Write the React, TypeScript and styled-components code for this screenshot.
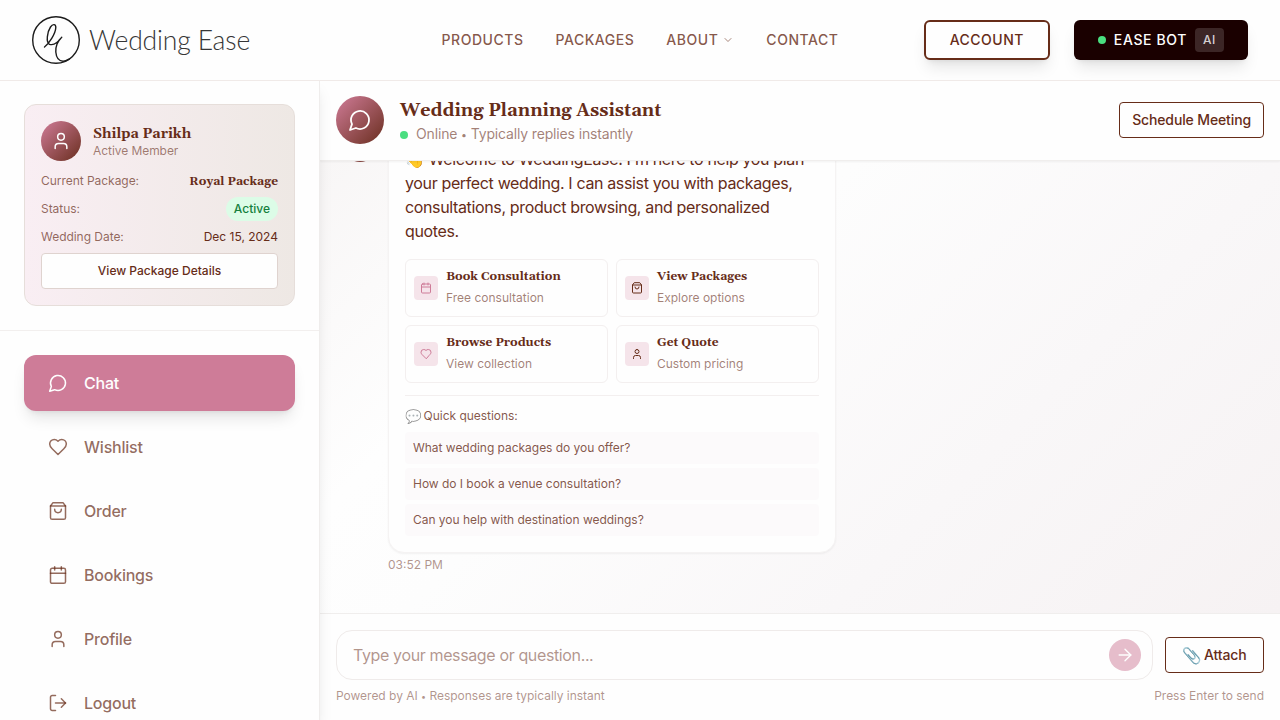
import React from "react";
import styled, { createGlobalStyle, css } from "styled-components";

const brownA = (a: number) => `rgba(102, 44, 24, ${a})`;
const serif = `Gelasio, Georgia, "Liberation Serif", serif`;

const Global = createGlobalStyle`
  * { box-sizing: border-box; }
  html, body { margin: 0; height: 100%; overflow: hidden; }
  body {
    font-family: Inter, "Liberation Sans", sans-serif;
    font-size: 16px;
    line-height: 24px;
    color: ${brownA(1)};
    background: #fefefe;
    -webkit-font-smoothing: antialiased;
  }
  button, input { font: inherit; color: inherit; margin: 0; }
`;

const Page = styled.div`
  height: 720px;
  display: flex;
  flex-direction: column;
  overflow: hidden;
`;

/* ---------- icons ---------- */

const paths = {
  chat: ["M7.9 20A9 9 0 1 0 4 16.1L2 22Z"],
  heart: [
    "M19 14c1.49-1.46 3-3.21 3-5.5A5.5 5.5 0 0 0 16.5 3c-1.76 0-3 .5-4.5 2-1.5-1.5-2.74-2-4.5-2A5.5 5.5 0 0 0 2 8.5c0 2.3 1.5 4.05 3 5.5l7 7Z",
  ],
  bag: ["M6 2 3 6v14a2 2 0 0 0 2 2h14a2 2 0 0 0 2-2V6l-3-4Z", "M3 6h18", "M16 10a4 4 0 0 1-8 0"],
  calendar: [
    "M8 2v4",
    "M16 2v4",
    "M5 4h14a2 2 0 0 1 2 2v14a2 2 0 0 1-2 2H5a2 2 0 0 1-2-2V6a2 2 0 0 1 2-2Z",
    "M3 10h18",
  ],
  user: ["M19 21v-2a4 4 0 0 0-4-4H9a4 4 0 0 0-4 4v2", "M12 3a4 4 0 1 0 0 8 4 4 0 0 0 0-8Z"],
  logout: ["M9 21H5a2 2 0 0 1-2-2V5a2 2 0 0 1 2-2h4", "m16 17 5-5-5-5", "M21 12H9"],
  arrow: ["M5 12h14", "m12 5 7 7-7 7"],
  chevron: ["m6 9 6 6 6-6"],
};

type IconName = keyof typeof paths;

const Svg = styled.svg`
  display: block;
  flex: none;
  fill: none;
  stroke: currentColor;
  stroke-linecap: round;
  stroke-linejoin: round;
`;

const Icon = ({ name, size, weight = 1.8 }: { name: IconName; size: number; weight?: number }) => (
  <Svg width={size} height={size} viewBox="0 0 24 24" strokeWidth={weight}>
    {paths[name].map((d) => (
      <path key={d} d={d} />
    ))}
  </Svg>
);

const Emoji = styled.span<{ $soft?: boolean }>`
  font-size: 1.12em;
  line-height: 0;
  margin: 0 -0.1em 0 -0.03em;
  vertical-align: -0.5px;
  opacity: ${(p) => (p.$soft ? 0.6 : 0.9)};
`;

/* ---------- top bar ---------- */

const TopBar = styled.header`
  flex: none;
  height: 81px;
  margin-bottom: -1px;
  padding: 0 32px;
  display: grid;
  grid-template-columns: 1fr auto 1fr;
  align-items: center;
  background: #fefefe;
  border-bottom: 1px solid #f0eae8;
  position: relative;
  z-index: 2;
`;

const Brand = styled.div`
  display: flex;
  align-items: center;
  gap: 9px;
  color: #1c1c1c;
`;

const BrandName = styled.span`
  font-family: Lato, sans-serif;
  font-weight: 300;
  font-size: 26.5px;
  line-height: 32px;
  letter-spacing: -0.15px;
  color: #363636;
  white-space: nowrap;
`;

const Nav = styled.nav`
  display: flex;
  align-items: center;
  gap: 32px;
`;

const NavLink = styled.a`
  display: flex;
  align-items: center;
  gap: 4px;
  font-size: 14px;
  line-height: 20px;
  font-weight: 450;
  letter-spacing: 0.53px;
  color: ${brownA(0.8)};
`;

const Chevron = styled.span`
  opacity: 0.7;
`;

const Actions = styled.div`
  display: flex;
  justify-content: flex-end;
  gap: 24px;
`;

const ActionButton = styled.button<{ $dark?: boolean }>`
  height: 40px;
  padding: 0 24px;
  display: flex;
  align-items: center;
  gap: 8px;
  border-radius: 6px;
  font-size: 14px;
  line-height: 20px;
  font-weight: 450;
  white-space: nowrap;
  box-shadow: 0 10px 15px -3px rgba(0, 0, 0, 0.1), 0 4px 6px -4px rgba(0, 0, 0, 0.1);
  ${(p) =>
    p.$dark
      ? css`
          border: 0;
          background: #1a0000;
          color: #fefefe;
          letter-spacing: 0.62px;
        `
      : css`
          border: 2px solid ${brownA(1)};
          background: #fefefe;
          letter-spacing: 0.48px;
        `}
`;

const Dot = styled.span`
  width: 8px;
  height: 8px;
  border-radius: 50%;
  background: #4ade80;
`;

const AiTag = styled.span`
  padding: 4px 8px;
  border-radius: 4px;
  background: rgba(255, 255, 255, 0.15);
  font-size: 12px;
  line-height: 16px;
  color: rgba(255, 255, 255, 0.8);
`;

/* ---------- sidebar ---------- */

const Body = styled.div`
  flex: 1;
  min-height: 0;
  display: flex;
`;

const Sidebar = styled.aside`
  width: 320px;
  flex: none;
  background: #fefefe;
  border-right: 1px solid #efedec;
  box-shadow: 0 10px 15px -3px rgba(0, 0, 0, 0.1), 0 4px 6px -4px rgba(0, 0, 0, 0.1);
  z-index: 1;
`;

const MemberSection = styled.section`
  padding: 24px;
  border-bottom: 1px solid #f2efee;
`;

const MemberCard = styled.div`
  height: 202px;
  padding: 16px;
  border: 1px solid #e6deda;
  border-radius: 12px;
  background: linear-gradient(to right, #f9eef3, #eee8e4);
`;

const MemberHead = styled.div`
  display: flex;
  align-items: center;
  gap: 12px;
  margin-bottom: 8px;
`;

const Avatar = styled.div<{ $size: number }>`
  width: ${(p) => p.$size}px;
  height: ${(p) => p.$size}px;
  flex: none;
  display: flex;
  align-items: center;
  justify-content: center;
  border-radius: 50%;
  color: #fefefe;
  background: linear-gradient(135deg, #d07c98, #6a2e1f);
`;

const MemberName = styled.div`
  padding-top: 1px;
  font-family: ${serif};
  font-weight: 700;
  font-size: 14px;
  line-height: 20px;
`;

const MemberRole = styled.div`
  margin-top: -1px;
  font-size: 12px;
  line-height: 16px;
  letter-spacing: -0.06px;
  color: ${brownA(0.6)};
`;

const Detail = styled.div`
  height: 24px;
  margin-bottom: 4px;
  display: flex;
  align-items: center;
  justify-content: space-between;
  font-size: 12px;
  line-height: 16px;
`;

const DetailLabel = styled.span`
  letter-spacing: -0.04px;
  color: ${brownA(0.7)};
`;

const PackageName = styled.span`
  padding-top: 2px;
  font-family: ${serif};
  font-weight: 700;
`;

const StatusPill = styled.span`
  padding: 4px 8px;
  border-radius: 12px;
  background: #dcfce7;
  color: #15803d;
  font-weight: 500;
`;

const DetailsButton = styled.button`
  display: block;
  width: 100%;
  height: 36px;
  border: 1px solid #dfd3cf;
  border-radius: 4px;
  background: #fefefe;
  font-size: 12px;
  line-height: 16px;
  font-weight: 500;
`;

const Menu = styled.nav`
  padding: 24px;
  display: flex;
  flex-direction: column;
  gap: 8px;
`;

const MenuItem = styled.a<{ $active?: boolean }>`
  height: 56px;
  padding: 0 24px;
  display: flex;
  align-items: center;
  gap: 16px;
  border-radius: 12px;
  font-weight: 500;
  letter-spacing: -0.22px;
  color: ${brownA(0.7)};
  ${(p) =>
    p.$active &&
    css`
      color: #fefefe;
      background: #ce7c98;
      box-shadow: 0 10px 15px -3px rgba(0, 0, 0, 0.1), 0 4px 6px -4px rgba(0, 0, 0, 0.1);
    `}
`;

/* ---------- chat ---------- */

const Chat = styled.main`
  flex: 1;
  min-width: 0;
  display: flex;
  flex-direction: column;
`;

const ChatHeader = styled.div`
  flex: none;
  height: 81px;
  padding: 0 16px;
  display: flex;
  align-items: center;
  gap: 16px;
  background: #fefefe;
  border-bottom: 1px solid #f0eeed;
  box-shadow: 0 1px 2px rgba(0, 0, 0, 0.05);
  position: relative;
`;

const ChatTitles = styled.div`
  flex: 1;
`;

const ChatTitle = styled.h1`
  margin: 0 0 -1px;
  padding-top: 3px;
  font-family: ${serif};
  font-weight: 700;
  font-size: 18px;
  line-height: 28px;
`;

const Presence = styled.div`
  display: flex;
  align-items: center;
  gap: 8px;
  font-size: 14px;
  line-height: 20px;
  letter-spacing: -0.15px;
  color: ${brownA(0.6)};
`;

const Bullet = styled.span`
  font-size: 0.75em;
  vertical-align: 0.5px;
`;

const OutlineButton = styled.button<{ $pad: number }>`
  flex: none;
  height: 36px;
  padding: 0 ${(p) => p.$pad}px;
  border: 1px solid ${brownA(1)};
  border-radius: 4px;
  background: #fefefe;
  font-size: 14px;
  line-height: 20px;
  font-weight: 500;
  letter-spacing: -0.13px;
  white-space: nowrap;
`;

const Messages = styled.div`
  flex: 1;
  min-height: 0;
  overflow: hidden;
  padding: 0 24px 40px;
  display: flex;
  flex-direction: column;
  justify-content: flex-end;
  background: linear-gradient(135deg, #f8f6f6 0%, #fefefe 25%, #fdfdfd 38%, #f9f7f8 68%, #f6f2f3 100%);
`;

const MessageRow = styled.div`
  display: flex;
  gap: 12px;
`;

const BubbleColumn = styled.div`
  width: 448px;
`;

const Bubble = styled.div`
  padding: 16px;
  border: 1px solid #f5f3f3;
  border-radius: 16px;
  background: #fefefe;
  box-shadow: 0 1px 2px rgba(0, 0, 0, 0.05);
`;

const Greeting = styled.p`
  margin: 0 0 16px;
  letter-spacing: -0.36px;
`;

const QuickGrid = styled.div`
  display: grid;
  grid-template-columns: 1fr 1fr;
  gap: 8px;
`;

const QuickCard = styled.div`
  height: 58px;
  padding: 0 8px;
  display: flex;
  align-items: center;
  gap: 8px;
  border: 1px solid #f3efef;
  border-radius: 6px;
`;

const QuickIcon = styled.span<{ $pink?: boolean }>`
  width: 24px;
  height: 24px;
  display: flex;
  align-items: center;
  justify-content: center;
  border-radius: 4px;
  background: #f5e4ea;
  color: ${(p) => (p.$pink ? "#ce7c98" : brownA(1))};
`;

const QuickTitle = styled.div`
  font-family: ${serif};
  font-weight: 700;
  font-size: 12px;
  line-height: 16px;
  margin-bottom: 5px;
`;

const QuickSub = styled.div`
  padding-bottom: 2px;
  font-size: 12px;
  line-height: 16px;
  color: ${brownA(0.6)};
`;

const Questions = styled.div`
  margin-top: 12px;
  padding-top: 12px;
  border-top: 1px solid #f3efef;
  display: flex;
  flex-direction: column;
  gap: 4px;
  font-size: 12px;
  line-height: 16px;
  letter-spacing: -0.03px;
  color: ${brownA(0.8)};
`;

const QuestionsLabel = styled.div`
  margin-bottom: 4px;
`;

const Question = styled.div`
  padding: 8px;
  border-radius: 4px;
  background: #fcfafb;
`;

const Time = styled.div`
  margin-top: 4px;
  font-size: 12px;
  line-height: 16px;
  color: ${brownA(0.5)};
`;

/* ---------- composer ---------- */

const Composer = styled.div`
  flex: none;
  height: 107px;
  padding: 16px;
  background: #fefefe;
  border-top: 1px solid #f0eeed;
`;

const ComposerRow = styled.div`
  display: flex;
  align-items: center;
  gap: 12px;
`;

const Field = styled.div`
  flex: 1;
  height: 50px;
  padding: 0 11px 0 16px;
  display: flex;
  align-items: center;
  border: 1px solid #efebea;
  border-radius: 16px;
`;

const Input = styled.input`
  flex: 1;
  padding: 0;
  border: 0;
  outline: 0;
  background: transparent;
  letter-spacing: -0.37px;
  &::placeholder {
    color: ${brownA(0.5)};
    opacity: 1;
  }
`;

const Send = styled.button`
  width: 32px;
  height: 32px;
  padding: 0;
  display: flex;
  align-items: center;
  justify-content: center;
  border: 0;
  border-radius: 50%;
  background: #e6bdcb;
  color: #fefefe;
`;

const AttachButton = styled(OutlineButton)`
  width: 99px;
`;

const Hints = styled.div`
  margin-top: 8px;
  display: flex;
  justify-content: space-between;
  font-size: 12px;
  line-height: 16px;
  letter-spacing: -0.02px;
  color: ${brownA(0.5)};
`;

const menu: { icon: IconName; label: string }[] = [
  { icon: "chat", label: "Chat" },
  { icon: "heart", label: "Wishlist" },
  { icon: "bag", label: "Order" },
  { icon: "calendar", label: "Bookings" },
  { icon: "user", label: "Profile" },
  { icon: "logout", label: "Logout" },
];

const quick: { icon: IconName; title: string; sub: string; pink?: boolean }[] = [
  { icon: "calendar", title: "Book Consultation", sub: "Free consultation", pink: true },
  { icon: "bag", title: "View Packages", sub: "Explore options" },
  { icon: "heart", title: "Browse Products", sub: "View collection", pink: true },
  { icon: "user", title: "Get Quote", sub: "Custom pricing" },
];

const questions = [
  "What wedding packages do you offer?",
  "How do I book a venue consultation?",
  "Can you help with destination weddings?",
];

export default function App() {
  return (
    <>
      <Global />
      <Page>
        <TopBar>
          <Brand>
            <Svg width="48" height="48" viewBox="0 0 48 48" strokeWidth="1.4">
              <circle cx="24" cy="24" r="23.3" />
              <path d="M12.5 31C17 27.5 23.5 18 23.8 11.5C23.9 8 20.8 7.5 18.5 11C15.5 15.5 13.5 26.5 17.5 28.3C21.5 29.7 26 26.5 29.8 21.2C25.5 24.5 23.4 31 23.8 36C24.3 42 27 45 31 45.3C33.5 45.4 35.5 44 37.5 42.8" />
            </Svg>
            <BrandName>Wedding Ease</BrandName>
          </Brand>
          <Nav>
            <NavLink>PRODUCTS</NavLink>
            <NavLink>PACKAGES</NavLink>
            <NavLink>
              ABOUT
              <Chevron>
                <Icon name="chevron" size={12} weight={2} />
              </Chevron>
            </NavLink>
            <NavLink>CONTACT</NavLink>
          </Nav>
          <Actions>
            <ActionButton>ACCOUNT</ActionButton>
            <ActionButton $dark>
              <Dot />
              EASE BOT
              <AiTag>AI</AiTag>
            </ActionButton>
          </Actions>
        </TopBar>
        <Body>
          <Sidebar>
            <MemberSection>
              <MemberCard>
                <MemberHead>
                  <Avatar $size={40}>
                    <Icon name="user" size={20} />
                  </Avatar>
                  <div>
                    <MemberName>Shilpa Parikh</MemberName>
                    <MemberRole>Active Member</MemberRole>
                  </div>
                </MemberHead>
                <Detail>
                  <DetailLabel>Current Package:</DetailLabel>
                  <PackageName>Royal Package</PackageName>
                </Detail>
                <Detail>
                  <DetailLabel>Status:</DetailLabel>
                  <StatusPill>Active</StatusPill>
                </Detail>
                <Detail>
                  <DetailLabel>Wedding Date:</DetailLabel>
                  <span>Dec 15, 2024</span>
                </Detail>
                <DetailsButton>View Package Details</DetailsButton>
              </MemberCard>
            </MemberSection>
            <Menu>
              {menu.map((m, i) => (
                <MenuItem key={m.label} $active={i === 0}>
                  <Icon name={m.icon} size={20} />
                  {m.label}
                </MenuItem>
              ))}
            </Menu>
          </Sidebar>
          <Chat>
            <ChatHeader>
              <Avatar $size={48}>
                <Icon name="chat" size={24} />
              </Avatar>
              <ChatTitles>
                <ChatTitle>Wedding Planning Assistant</ChatTitle>
                <Presence>
                  <Dot />
                  <span>
                    Online <Bullet>•</Bullet> Typically replies instantly
                  </span>
                </Presence>
              </ChatTitles>
              <OutlineButton $pad={12}>Schedule Meeting</OutlineButton>
            </ChatHeader>
            <Messages>
              <MessageRow>
                <Avatar $size={32}>
                  <Icon name="chat" size={16} />
                </Avatar>
                <BubbleColumn>
                  <Bubble>
                    <Greeting>
                      👋 Welcome to WeddingEase! I'm here to help you plan your perfect wedding. I can assist you with
                      packages, consultations, product browsing, and personalized quotes.
                    </Greeting>
                    <QuickGrid>
                      {quick.map((q) => (
                        <QuickCard key={q.title}>
                          <QuickIcon $pink={q.pink}>
                            <Icon name={q.icon} size={12} weight={2} />
                          </QuickIcon>
                          <div>
                            <QuickTitle>{q.title}</QuickTitle>
                            <QuickSub>{q.sub}</QuickSub>
                          </div>
                        </QuickCard>
                      ))}
                    </QuickGrid>
                    <Questions>
                      <QuestionsLabel>
                        <Emoji $soft>💬</Emoji> Quick questions:
                      </QuestionsLabel>
                      {questions.map((q) => (
                        <Question key={q}>{q}</Question>
                      ))}
                    </Questions>
                  </Bubble>
                  <Time>03:52 PM</Time>
                </BubbleColumn>
              </MessageRow>
            </Messages>
            <Composer>
              <ComposerRow>
                <Field>
                  <Input placeholder="Type your message or question..." />
                  <Send>
                    <Icon name="arrow" size={20} weight={1.6} />
                  </Send>
                </Field>
                <AttachButton $pad={0}>
                  <Emoji>📎</Emoji> Attach
                </AttachButton>
              </ComposerRow>
              <Hints>
                <span>
                  Powered by AI <Bullet>•</Bullet> Responses are typically instant
                </span>
                <span>Press Enter to send</span>
              </Hints>
            </Composer>
          </Chat>
        </Body>
      </Page>
    </>
  );
}
